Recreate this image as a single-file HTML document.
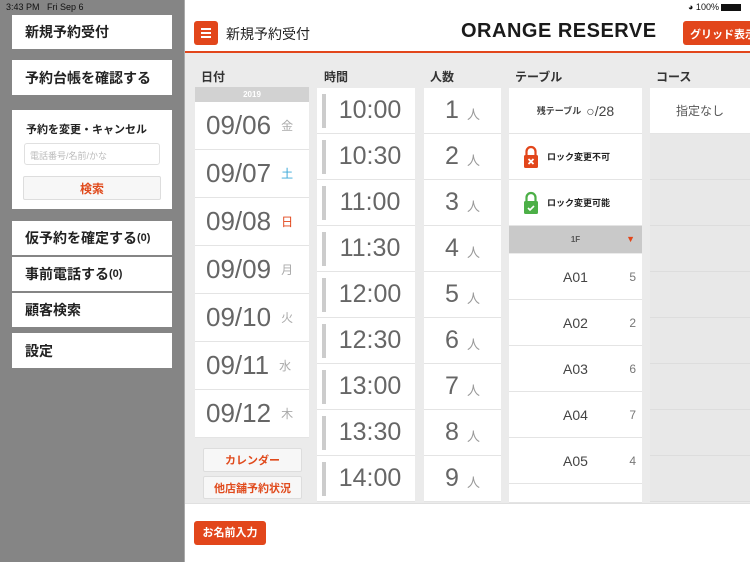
<!DOCTYPE html>
<html><head><meta charset="utf-8"><style>
*{margin:0;padding:0;box-sizing:border-box}
body{width:750px;height:562px;overflow:hidden;position:relative;font-family:"Liberation Sans","Noto Sans CJK JP",sans-serif;background:#fff;color:#333}
.a{position:absolute}
.side{left:0;top:0;width:184px;height:562px;background:#858585}
.card{position:absolute;left:12px;width:160px;background:#fff;font-weight:bold;font-size:14px;color:#222;padding-left:13px;display:flex;align-items:center}
.main{left:184px;top:0;width:566px;height:562px;background:#fff;border-left:1px solid #aaa}
.gray{left:185px;top:53px;width:565px;height:450px;background:#ebebeb}
.hd{font-size:12px;font-weight:bold;color:#333;top:68px}
.cell{position:absolute;background:#fff;border-bottom:1px solid #e4e4e4}
.date{left:195px;width:114px;height:48px;font-size:26px;color:#666;padding-left:11px;display:flex;align-items:center}
.date span{font-size:12px;margin-left:10px;color:#aaa}
.time{left:317px;width:98px;height:46px;font-size:25px;color:#666;display:flex;align-items:center;justify-content:center}
.time:before{content:"";position:absolute;left:5px;top:6px;width:4px;height:34px;background:#ccc}
.time b{font-weight:normal;margin-left:8px}
.ppl{left:424px;width:77px;height:46px;font-size:25px;color:#666;display:flex;align-items:center;justify-content:center}
.ppl span{font-size:13px;color:#999;margin-left:8px;margin-top:5px}
.tb{left:509px;width:133px;height:46px;font-size:14px;color:#444;display:flex;align-items:center;justify-content:center}
.tb span{position:absolute;right:6px;font-size:12px;color:#777}
.co{left:650px;width:100px;height:46px;background:#e8e8e8;border-bottom:1px solid #ddd}
.btn{position:absolute;background:#f7f7f7;border:1px solid #ddd;border-radius:2px;color:#e04a1c;font-size:11px;font-weight:bold;display:flex;align-items:center;justify-content:center}
.lk{font-size:9px;font-weight:bold;color:#222;justify-content:flex-start;padding-left:38px}
</style></head><body>
<div class="a side"></div>
<div class="a" style="left:6px;top:2px;font-size:9px;color:#111">3:43 PM&nbsp;&nbsp; Fri Sep 6</div>
<div class="card" style="top:15px;height:34px">新規予約受付</div>
<div class="card" style="top:60px;height:35px">予約台帳を確認する</div>
<div class="card" style="top:110px;height:99px;display:block;padding:0">
 <div style="font-size:11px;margin:11px 0 0 14px">予約を変更・キャンセル</div>
 <div style="position:absolute;left:12px;top:33px;width:136px;height:22px;border:1px solid #e0e0e0;border-radius:3px;font-size:9px;color:#bbb;font-weight:normal;padding:5px 0 0 5px">電話番号/名前/かな</div>
 <div class="btn" style="left:11px;top:66px;width:138px;height:24px;font-size:12px">検索</div>
</div>
<div class="card" style="top:221px;height:34px">仮予約を確定する<span style="font-size:11px">(0)</span></div>
<div class="card" style="top:257px;height:34px">事前電話する<span style="font-size:11px">(0)</span></div>
<div class="card" style="top:293px;height:34px">顧客検索</div>
<div class="card" style="top:333px;height:35px">設定</div>

<div class="a main"></div>
<div class="a" style="left:688px;top:2px;font-size:9px;color:#111">&#9685; 100% <span style="display:inline-block;width:20px;height:7px;background:#111;vertical-align:middle"></span></div>
<div class="a" style="left:194px;top:21px;width:24px;height:24px;background:#e2461b;border-radius:3px">
 <div class="a" style="left:7px;top:7px;width:10px;height:2px;background:#fff"></div>
 <div class="a" style="left:7px;top:11px;width:10px;height:2px;background:#fff"></div>
 <div class="a" style="left:7px;top:15px;width:10px;height:2px;background:#fff"></div>
</div>
<div class="a" style="left:226px;top:24px;font-size:14px;color:#222">新規予約受付</div>
<div class="a" style="left:461px;top:20px;font-size:20px;font-weight:bold;color:#1a1a1a;letter-spacing:0.5px">ORANGE RESERVE</div>
<div class="a" style="left:683px;top:21px;width:70px;height:24px;background:#e2461b;border-radius:3px;color:#fff;font-size:11px;font-weight:bold;padding:5px 0 0 7px;white-space:nowrap;overflow:hidden">グリッド表示</div>
<div class="a" style="left:185px;top:51px;width:565px;height:2px;background:#e2461b"></div>
<div class="a gray"></div>

<div class="a hd" style="left:201px">日付</div>
<div class="a hd" style="left:324px">時間</div>
<div class="a hd" style="left:430px">人数</div>
<div class="a hd" style="left:515px">テーブル</div>
<div class="a hd" style="left:656px">コース</div>

<div class="a" style="left:195px;top:87px;width:114px;height:15px;background:#d2d2d2;color:#fff;font-size:8px;font-weight:bold;text-align:center;line-height:15px">2019</div>
<div class="cell date" style="top:102px">09/06<span>金</span></div>
<div class="cell date" style="top:150px">09/07<span style="color:#3aa8d8">土</span></div>
<div class="cell date" style="top:198px">09/08<span style="color:#e2461b">日</span></div>
<div class="cell date" style="top:246px">09/09<span>月</span></div>
<div class="cell date" style="top:294px">09/10<span>火</span></div>
<div class="cell date" style="top:342px">09/11<span>水</span></div>
<div class="cell date" style="top:390px">09/12<span>木</span></div>
<div class="btn" style="left:203px;top:448px;width:99px;height:24px">カレンダー</div>
<div class="btn" style="left:203px;top:476px;width:99px;height:23px">他店舗予約状況</div>

<div class="cell time" style="top:88px"><b>10:00</b></div>
<div class="cell time" style="top:134px"><b>10:30</b></div>
<div class="cell time" style="top:180px"><b>11:00</b></div>
<div class="cell time" style="top:226px"><b>11:30</b></div>
<div class="cell time" style="top:272px"><b>12:00</b></div>
<div class="cell time" style="top:318px"><b>12:30</b></div>
<div class="cell time" style="top:364px"><b>13:00</b></div>
<div class="cell time" style="top:410px"><b>13:30</b></div>
<div class="cell time" style="top:456px"><b>14:00</b></div>

<div class="cell ppl" style="top:88px">1<span>人</span></div>
<div class="cell ppl" style="top:134px">2<span>人</span></div>
<div class="cell ppl" style="top:180px">3<span>人</span></div>
<div class="cell ppl" style="top:226px">4<span>人</span></div>
<div class="cell ppl" style="top:272px">5<span>人</span></div>
<div class="cell ppl" style="top:318px">6<span>人</span></div>
<div class="cell ppl" style="top:364px">7<span>人</span></div>
<div class="cell ppl" style="top:410px">8<span>人</span></div>
<div class="cell ppl" style="top:456px">9<span>人</span></div>

<div class="cell tb" style="top:88px;font-size:9px;font-weight:bold">残テーブル&nbsp;&nbsp;<span style="position:static;font-size:14px;color:#444;font-weight:normal">○/28</span></div>
<div class="cell tb lk" style="top:134px">ロック変更不可</div>
<svg class="a" style="left:523px;top:145px" width="16" height="24" viewBox="0 0 16 24"><path d="M3.5 10V6.5a4.5 4.5 0 0 1 9 0V10" fill="none" stroke="#e2461b" stroke-width="2.2"/><rect x="1" y="10" width="14" height="13" rx="1.5" fill="#e2461b"/><path d="M5.5 14l5 5M10.5 14l-5 5" stroke="#fff" stroke-width="1.8"/></svg>
<div class="cell tb lk" style="top:180px">ロック変更可能</div>
<svg class="a" style="left:523px;top:191px" width="16" height="24" viewBox="0 0 16 24"><path d="M3.5 10V6.5a4.5 4.5 0 0 1 9 0V10" fill="none" stroke="#4caf47" stroke-width="2.2"/><rect x="1" y="10" width="14" height="13" rx="1.5" fill="#4caf47"/><path d="M5 17l2 2 4-4" fill="none" stroke="#fff" stroke-width="1.6"/></svg>
<div class="a" style="left:509px;top:226px;width:133px;height:27px;background:#c9c9c9;font-size:8px;font-weight:bold;color:#555;text-align:center;line-height:27px">1F<span style="position:absolute;right:7px;top:0;color:#e2461b;font-size:9px">▼</span></div>
<div class="cell tb" style="top:254px">A01<span>5</span></div>
<div class="cell tb" style="top:300px">A02<span>2</span></div>
<div class="cell tb" style="top:346px">A03<span>6</span></div>
<div class="cell tb" style="top:392px">A04<span>7</span></div>
<div class="cell tb" style="top:438px">A05<span>4</span></div>
<div class="cell tb" style="top:484px;height:19px"></div>

<div class="cell" style="left:650px;top:88px;width:100px;height:46px;font-size:12px;color:#555;text-align:center;line-height:46px">指定なし</div>
<div class="a co" style="top:134px"></div>
<div class="a co" style="top:180px"></div>
<div class="a co" style="top:226px"></div>
<div class="a co" style="top:272px"></div>
<div class="a co" style="top:318px"></div>
<div class="a co" style="top:364px"></div>
<div class="a co" style="top:410px"></div>
<div class="a co" style="top:456px"></div>

<div class="a" style="left:185px;top:503px;width:565px;height:59px;background:#fff;border-top:1px solid #e0e0e0"></div>
<div class="a" style="left:194px;top:521px;width:72px;height:24px;background:#e2461b;border-radius:3px;color:#fff;font-size:11px;font-weight:bold;text-align:center;line-height:24px">お名前入力</div>
</body></html>
